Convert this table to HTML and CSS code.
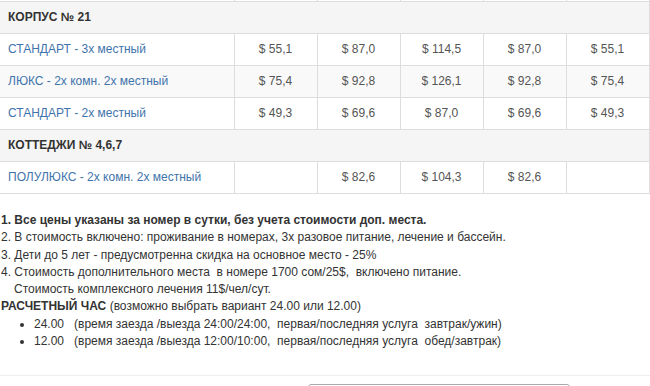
FILE: index.html
```
<!DOCTYPE html>
<html lang="ru">
<head>
<meta charset="utf-8">
<title>Цены</title>
<link rel="stylesheet" href="styles.css">
</head>
<body>
<table class="prices">
  <colgroup>
    <col class="c-name"><col class="c-p"><col class="c-p"><col class="c-p"><col class="c-p"><col class="c-p">
  </colgroup>
  <tr class="sliver"><td></td><td></td><td></td><td></td><td></td><td></td></tr>
  <tr class="group"><td colspan="6">КОРПУС № 21</td></tr>
  <tr><td><a href="#">СТАНДАРТ - 3х местный</a></td><td>$ 55,1</td><td>$ 87,0</td><td>$ 114,5</td><td>$ 87,0</td><td>$ 55,1</td></tr>
  <tr class="odd"><td><a href="#">ЛЮКС - 2х комн. 2х местный</a></td><td>$ 75,4</td><td>$ 92,8</td><td>$ 126,1</td><td>$ 92,8</td><td>$ 75,4</td></tr>
  <tr><td><a href="#">СТАНДАРТ - 2х местный</a></td><td>$ 49,3</td><td>$ 69,6</td><td>$ 87,0</td><td>$ 69,6</td><td>$ 49,3</td></tr>
  <tr class="group"><td colspan="6">КОТТЕДЖИ № 4,6,7</td></tr>
  <tr><td><a href="#">ПОЛУЛЮКС - 2х комн. 2х местный</a></td><td></td><td>$ 82,6</td><td>$ 104,3</td><td>$ 82,6</td><td></td></tr>
</table>

<div class="notes">
  <p><b>1. Все цены указаны за номер в сутки, без учета стоимости доп. места.</b></p>
  <p>2. В стоимость включено: проживание в номерах, 3х разовое питание, лечение и бассейн.</p>
  <p>3. Дети до 5 лет - предусмотренна скидка на основное место - 25%</p>
  <p>4. Стоимость дополнительного места &nbsp;в номере 1700 сом/25$, &nbsp;включено питание.</p>
  <p class="indent">Стоимость комплексного лечения 11$/чел/сут.</p>
  <p><b>РАСЧЕТНЫЙ ЧАС</b> (возможно выбрать вариант 24.00 или 12.00)</p>
  <ul>
    <li>24.00 &nbsp; (время заезда /выезда 24:00/24:00, &nbsp;первая/последняя услуга &nbsp;завтрак/ужин)</li>
    <li>12.00 &nbsp; (время заезда /выезда 12:00/10:00, &nbsp;первая/последняя услуга &nbsp;обед/завтрак)</li>
  </ul>
</div>

<div class="footer">
  <div class="box"></div>
</div>
</body>
</html>
```
FILE: styles.css
```
html, body {
  margin: 0;
  padding: 0;
  background: #fff;
}
body {
  font-family: "Liberation Sans", Arial, sans-serif;
  color: #333;
  width: 650px;
  height: 386px;
  overflow: hidden;
}
.prices {
  border-collapse: collapse;
  width: 649px;
  table-layout: fixed;
  font-size: 12px;
}
.c-name { width: 234px; }
.c-p { width: 83px; }
.prices td {
  border: 1px solid #ddd;
  height: 31px;
  padding: 0 8px;
  vertical-align: middle;
  text-align: center;
  color: #555;
  line-height: 17px;
}
.prices td:first-child {
  border-left: none;
  text-align: left;
}
.prices tr.sliver td {
  height: 1px;
  padding: 0;
  line-height: 0;
  font-size: 0;
  border-top: none;
}
.prices tr.group td {
  background: #f5f5f5;
  color: #333;
  font-weight: bold;
  text-align: left;
}
.prices tr.odd td {
  background: #f9f9f9;
}
.prices a {
  color: #3f74ab;
  text-decoration: none;
}
.notes {
  padding: 18px 0 0 1px;
  font-size: 12px;
  line-height: 17.3px;
  color: #333;
}
.notes p {
  margin: 0;
}
.notes .indent {
  padding-left: 13px;
}
.notes ul {
  margin: 0;
  padding-left: 33px;
}
.footer {
  margin-top: 25px;
  border-top: 1px solid #eee;
  padding-top: 8px;
}
.box {
  margin-left: 308px;
  width: 260px;
  height: 30px;
  border: 1px solid #aaa;
  border-radius: 3px;
}
```
